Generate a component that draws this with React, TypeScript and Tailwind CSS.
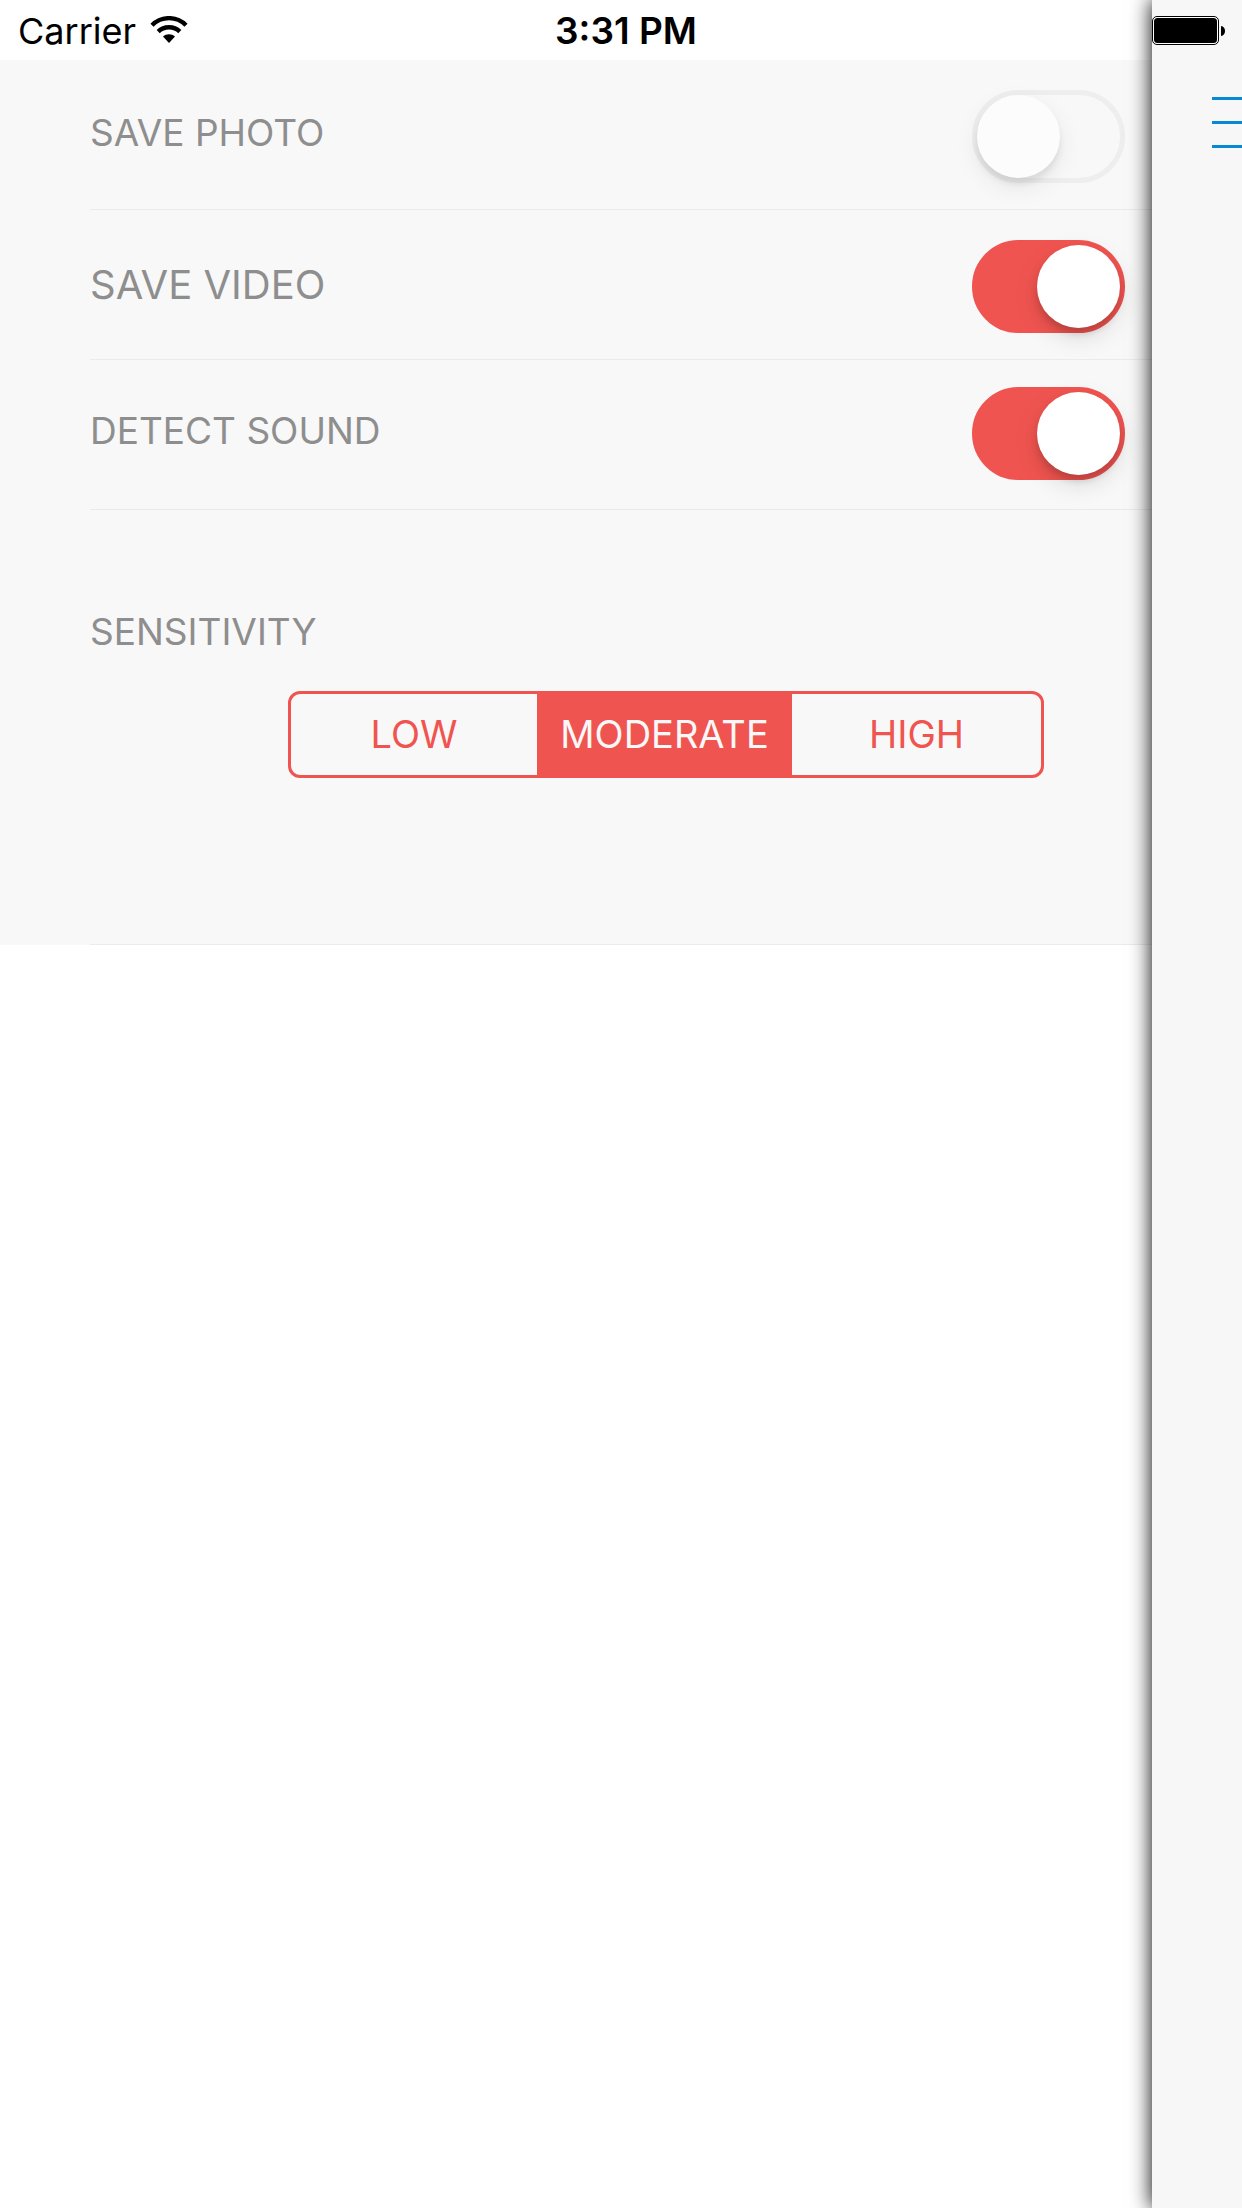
import { useState } from "react";

function WifiIcon() {
  return (
    <svg viewBox="0 0 38 28" className="mb-0.5 h-7 w-[38px]" aria-hidden="true">
      <g fill="none" stroke="#000" strokeWidth="4.4">
        <path d="M2 9.2 C11.5 -0.2 26.5 -0.2 36 9.2" />
        <path d="M8.2 15.6 C14 9.8 24 9.8 29.8 15.6" />
      </g>
      <path d="M13 20.4 C16.4 17.4 21.6 17.4 25 20.4 L19 27 Z" />
    </svg>
  );
}

function BatteryIcon() {
  return (
    <svg viewBox="0 0 74 29" className="mb-0.5 h-[29px] w-[74px]" aria-label="Battery full">
      <rect x="0.5" y="0.5" width="66" height="28" rx="4.5" fill="#fff" stroke="#000" />
      <rect x="2" y="2" width="63" height="25" rx="3.5" fill="#000" />
      <path d="M69 10 C74.4 10.6 74.4 19.4 69 20 Z" />
    </svg>
  );
}

function StatusBar() {
  return (
    <header className="absolute inset-x-0 top-0 z-20 flex h-[62px] items-center font-['Inter',sans-serif] text-[36px] leading-[62px] text-black">
      <div className="flex flex-1 items-center gap-[14px] pl-[18px]">
        <span>Carrier</span>
        <WifiIcon />
      </div>
      <time className="pl-2 text-[37px] font-semibold">3:31 PM</time>
      <div className="flex flex-1 justify-end pr-4">
        <BatteryIcon />
      </div>
    </header>
  );
}

interface SwitchRowProps {
  id: string;
  label: string;
  initial: boolean;
  className: string;
  labelClassName: string;
}

function SwitchRow({ id, label, initial, className, labelClassName }: SwitchRowProps) {
  const [on, setOn] = useState(initial);
  return (
    <li className="bg-[#f8f8f8] pl-[90px]">
      <div className={`flex h-[150px] items-start justify-between border-b border-[#ebebeb] pr-[27px] ${className}`}>
        <label htmlFor={id} className={labelClassName}>
          {label}
        </label>
        <input
          id={id}
          type="checkbox"
          role="switch"
          checked={on}
          onChange={(e) => setOn(e.target.checked)}
          className="flex h-[93px] w-[153px] cursor-pointer appearance-none rounded-full border-5 border-[#eeeeee] bg-[#f8f8f8] before:h-[83px] before:w-[83px] before:rounded-full before:bg-[#fcfcfc] before:shadow-[0_9px_24px_rgba(0,0,0,0.08),0_6px_6px_rgba(0,0,0,0.07)] checked:justify-end checked:border-[#f05450] checked:bg-[#f05450] checked:before:bg-white checked:before:shadow-[0_9px_24px_rgba(0,0,0,0.13),0_6px_6px_rgba(0,0,0,0.13)]"
        />
      </div>
    </li>
  );
}

const levels = ["LOW", "MODERATE", "HIGH"];

function Sensitivity() {
  const [level, setLevel] = useState("MODERATE");
  return (
    <li className="bg-[#f8f8f8] pl-[90px]">
      <div className="h-[435px] border-b border-[#ebebeb] pt-[98px] pr-[108px]">
        <h2 id="sensitivity" className="text-[37px] leading-[48px]">
          SENSITIVITY
        </h2>
        <div
          role="group"
          aria-labelledby="sensitivity"
          className="mt-[35px] ml-[198px] grid h-[87px] grid-cols-[82fr_85fr_83fr] overflow-hidden rounded-[12px] border-3 border-[#f05450] text-[38px] text-[#f05450]"
        >
          {levels.map((name) => (
            <button
              key={name}
              type="button"
              aria-pressed={level === name}
              onClick={() => setLevel(name)}
              className="min-w-0 cursor-pointer aria-pressed:bg-[#f05450] aria-pressed:text-[#f8f8f8]"
            >
              {name}
            </button>
          ))}
        </div>
      </div>
    </li>
  );
}

export default function App() {
  return (
    <div className="relative flex min-h-screen overflow-hidden bg-white">
      <StatusBar />
      <main className="min-w-0 flex-1 pt-15 font-['Inter',sans-serif] text-[#8e8e8e]">
        <ul>
          <SwitchRow id="photo" label="SAVE PHOTO" initial={false} className="pt-[30px]" labelClassName="pt-[19px] text-[37px] leading-[48px]" />
          <SwitchRow id="video" label="SAVE VIDEO" initial className="pt-[30px]" labelClassName="pt-[21px] text-[40px] leading-[48px]" />
          <SwitchRow id="sound" label="DETECT SOUND" initial className="pt-[27px]" labelClassName="pt-5 text-[37px] leading-[48px]" />
          <Sensitivity />
        </ul>
      </main>
      <aside className="z-10 w-[90px] shrink-0 bg-[#f7f7f7] pt-[97px] pl-[60px] shadow-[0_0_20px_#000]">
        <button type="button" aria-label="Menu" className="flex w-full cursor-pointer flex-col gap-[21px]">
          <span className="h-[3px] w-full bg-[#0788d3]" />
          <span className="h-[3px] w-full bg-[#0788d3]" />
          <span className="h-[3px] w-full bg-[#0788d3]" />
        </button>
      </aside>
    </div>
  );
}
